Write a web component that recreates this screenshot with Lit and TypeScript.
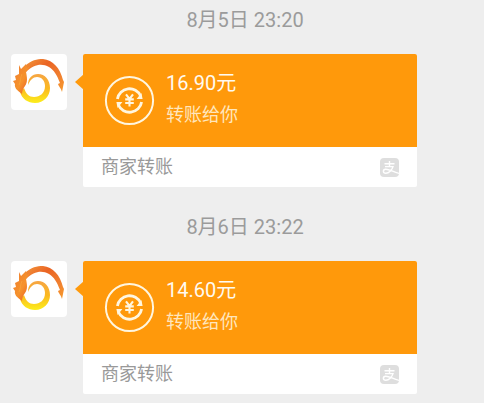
import { LitElement, html, css, svg } from "lit";
import { customElement, property } from "lit/decorators.js";

interface Transfer {
  time: string;
  amount: string;
  note: string;
  source: string;
}

const transfers: Transfer[] = [
  { time: "8月5日 23:20", amount: "16.90元", note: "转账给你", source: "商家转账" },
  { time: "8月6日 23:22", amount: "14.60元", note: "转账给你", source: "商家转账" },
];

const phoenix = svg`
  <defs>
    <linearGradient id="wing" x1="0" y1="0" x2="1" y2="1">
      <stop offset="0" stop-color="#f39a3c" />
      <stop offset="0.35" stop-color="#ea6424" />
      <stop offset="0.7" stop-color="#f08030" />
      <stop offset="1" stop-color="#f79a2a" />
    </linearGradient>
    <linearGradient id="tail" x1="0" y1="0" x2="0" y2="1">
      <stop offset="0" stop-color="#f6a544" />
      <stop offset="0.5" stop-color="#fbb81f" />
      <stop offset="1" stop-color="#fcee1c" />
    </linearGradient>
    <linearGradient id="head" x1="0" y1="0" x2="1" y2="1">
      <stop offset="0" stop-color="#ee7a30" />
      <stop offset="0.55" stop-color="#f6932c" />
      <stop offset="1" stop-color="#e8501f" />
    </linearGradient>
  </defs>
  <path fill="url(#wing)" d="M14 12 C20 6 26 5 32 5 C42 6 49 14 52 26 L53 28 L51 38 C50 34 48 33 47 30 L49 29 C46 21 43 16 38 13 C31 9 23 10 15 18 Z" />
  <path fill="url(#tail)" d="M9 38 C11 45 17 49 24 49 C33 49 39 42 39 34 C39 26 34 20 27 20 C21 20 17 24 17 31 C19 26 22 23 26 23 C31 23 34 27 34 32 C34 39 29 43 23 43 C18 43 15 40 13 34 Z" />
  <path fill="url(#head)" d="M8 11 L10 15 L15 10 L16 14 L19 12 L15 18 C16 23 17 28 14 32 C12 35 11 37 11 40 C7 37 3 34 4 30 L2 27 L5 26 L4 22 L8 20 Z" />
  <path fill="none" stroke="#fab244" stroke-width="1" stroke-opacity="0.5" d="M11 20 C9 24 10 27 8 31" />`;

const exchange = svg`
  <circle cx="24.5" cy="24.5" r="23.6" fill="none" stroke="#fff6e0" stroke-width="2" />
  <g fill="none" stroke="#fff6e0" stroke-width="2.8">
    <path d="M12.4 23 A12.2 12.2 0 0 1 35.6 20" />
    <path d="M36.6 26 A12.2 12.2 0 0 1 13.4 29" />
  </g>
  <path fill="#fff6e0" d="M36.4 17 L37.6 23 H31.6 Z M12.6 32 L11.4 26 H17.4 Z" />
  <path fill="none" stroke="#fff6e0" stroke-width="2.1" d="M21 18.4 L24.5 23 L28 18.4 M24.5 22.6 V30.6 M20.2 23.4 H28.8 M20.2 27 H28.8" />`;

const alipay = svg`
  <rect width="19" height="19" rx="4" fill="#dedede" />
  <path fill="none" stroke="#fff" stroke-width="1.4" d="M4.5 5.8 H14.5 M9.5 3 V8.4 M5 8.6 H13 C12 12 9 15.2 5.8 15.2 C2.6 15.2 2.6 11.4 5.6 11.2 C9 11 13 14 19 15.4" />`;

@customElement("transfer-card")
export class TransferCard extends LitElement {
  @property({ attribute: false }) transfer!: Transfer;

  static styles = css`
    :host {
      display: block;
      flex: 1;
      min-width: 0;
      position: relative;
    }
    .card {
      display: block;
      border-radius: 2px;
      overflow: hidden;
      background: #fff;
      color: inherit;
      text-decoration: none;
    }
    .pointer {
      position: absolute;
      left: -8px;
      top: 20px;
      width: 9px;
      height: 16px;
      background: #ff990b;
      clip-path: polygon(0 50%, 100% 0, 100% 100%);
    }
    .body {
      display: flex;
      align-items: center;
      gap: 12px;
      padding: 13px 22px 14px;
      background: #ff990b;
    }
    .coin {
      flex: none;
      display: block;
      width: 49px;
      height: 49px;
      overflow: visible;
    }
    .text {
      padding-bottom: 2px;
    }
    .amount,
    .note {
      line-height: 32px;
      white-space: nowrap;
    }
    .amount {
      font-size: 20px;
      color: #fffaf0;
    }
    .note {
      font-size: 18px;
      color: #ffe6bd;
    }
    .foot {
      display: flex;
      align-items: center;
      justify-content: space-between;
      padding: 0 18px;
      font-size: 18px;
      line-height: 40px;
      color: #999;
    }
    .brand {
      display: block;
      width: 19px;
      height: 19px;
    }
  `;

  render() {
    const t = this.transfer;
    return html`
      <span class="pointer"></span>
      <a class="card" href="#">
        <div class="body">
          <svg class="coin" viewBox="0 0 49 49" aria-hidden="true">${exchange}</svg>
          <div class="text">
            <div class="amount">${t.amount}</div>
            <div class="note">${t.note}</div>
          </div>
        </div>
        <div class="foot">
          <span>${t.source}</span>
          <svg class="brand" viewBox="0 0 19 19" aria-hidden="true">${alipay}</svg>
        </div>
      </a>
    `;
  }
}

@customElement("app-root")
export class AppRoot extends LitElement {
  static styles = css`
    :host {
      display: block;
      min-height: 100vh;
      background: #eee;
      font-family: Roboto, "Noto Sans CJK SC", sans-serif;
    }
    .message {
      padding-bottom: 20px;
    }
    .message:last-child {
      padding-bottom: 8px;
    }
    .time {
      display: block;
      padding-left: 6px;
      text-align: center;
      font-size: 20px;
      line-height: 40px;
      color: #9b9b9b;
    }
    .row {
      display: flex;
      align-items: flex-start;
      gap: 16px;
      padding: 14px 67px 0 11px;
    }
    .avatar {
      flex: none;
      display: block;
      width: 56px;
      height: 56px;
      border-radius: 4px;
      background: #fff;
    }
  `;

  render() {
    return html`
      <main>
        ${transfers.map(
          (t) => html`
            <section class="message">
              <time class="time">${t.time}</time>
              <div class="row">
                <svg class="avatar" viewBox="0 0 56 56" aria-hidden="true">${phoenix}</svg>
                <transfer-card .transfer=${t}></transfer-card>
              </div>
            </section>
          `
        )}
      </main>
    `;
  }
}
